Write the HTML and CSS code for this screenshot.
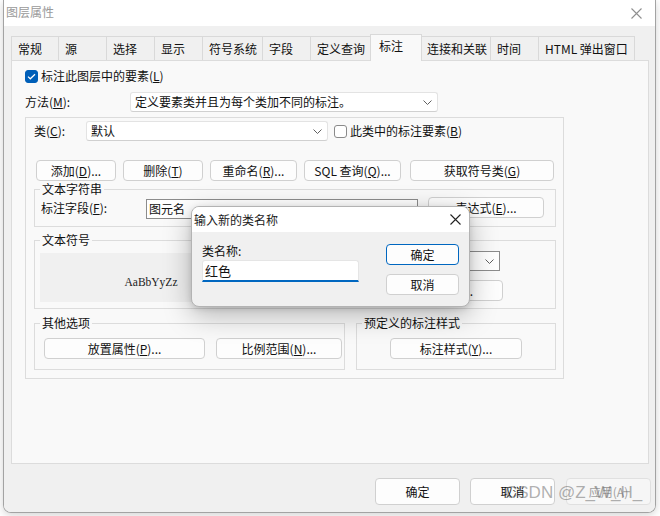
FILE: index.html
```html
<!DOCTYPE html>
<html lang="zh-CN">
<head>
<meta charset="utf-8">
<title>图层属性</title>
<link rel="stylesheet" href="styles.css">
</head>
<body>
<div class="window">
  <div class="titlebar">
    <span class="title">图层属性</span>
    <svg class="close" width="11" height="11" viewBox="0 0 11 11"><path d="M0.5 0.5L10.5 10.5M10.5 0.5L0.5 10.5" stroke="#8f8f8f" stroke-width="1.1" fill="none"/></svg>
  </div>
  <div class="client">
    <div class="tabs">
      <div class="tab first w48">常规</div>
      <div class="tab w48">源</div>
      <div class="tab w48">选择</div>
      <div class="tab w48">显示</div>
      <div class="tab w60">符号系统</div>
      <div class="tab w48">字段</div>
      <div class="tab w60">定义查询</div>
      <div class="tab sel">标注</div>
      <div class="tab w70">连接和关联</div>
      <div class="tab w48">时间</div>
      <div class="tab last w96">HTML 弹出窗口</div>
    </div>
    <div class="panel">
      <div class="row-check">
        <span class="cb checked"><svg width="9" height="7" viewBox="0 0 9 7"><path d="M1 3.6L3.3 5.8L8 1.2" stroke="#fff" stroke-width="1.2" fill="none"/></svg></span>
        <span class="cb-label">标注此图层中的要素(<u>L</u>)</span>
      </div>
      <div class="row-method">
        <span class="lbl-method">方法(<u>M</u>):</span>
        <div class="combo combo-method"><span>定义要素类并且为每个类加不同的标注。</span><svg class="chev" width="9" height="5" viewBox="0 0 9 5"><path d="M0.5 0.5L4.5 4.5L8.5 0.5" stroke="#606060" fill="none"/></svg></div>
      </div>
      <div class="grp-class">
        <div class="row-class">
          <span class="lbl-class">类(<u>C</u>):</span>
          <div class="combo combo-class"><span>默认</span><svg class="chev" width="9" height="5" viewBox="0 0 9 5"><path d="M0.5 0.5L4.5 4.5L8.5 0.5" stroke="#606060" fill="none"/></svg></div>
          <span class="cb cb-class"></span>
          <span class="cb-label2">此类中的标注要素(<u>B</u>)</span>
        </div>
        <div class="row-btns">
          <div class="btn b-add">添加(<u>D</u>)...</div>
          <div class="btn b-del">删除(<u>T</u>)</div>
          <div class="btn b-ren">重命名(<u>R</u>)...</div>
          <div class="btn b-sql">SQL 查询(<u>Q</u>)...</div>
          <div class="btn b-get">获取符号类(<u>G</u>)</div>
        </div>
        <fieldset class="fs fs-str">
          <legend>文本字符串</legend>
          <div class="row-field">
            <span class="lbl-field">标注字段(<u>F</u>):</span>
            <div class="field">图元名</div>
            <div class="btn b-expr">表达式(<u>E</u>)...</div>
          </div>
        </fieldset>
        <fieldset class="fs fs-sym">
          <legend>文本符号</legend>
          <div class="row-sym">
            <div class="preview">AaBbYyZz</div>
            <div class="sym-side">
              <div class="combo2"><svg class="chev" width="9" height="5" viewBox="0 0 9 5"><path d="M0.5 0.5L4.5 4.5L8.5 0.5" stroke="#606060" fill="none"/></svg></div>
              <div class="btn b-sym">符号(<u>S</u>)...</div>
            </div>
          </div>
        </fieldset>
        <div class="row-bottom">
          <fieldset class="fs fs-other">
            <legend>其他选项</legend>
            <div class="row-other">
              <div class="btn b-place">放置属性(<u>P</u>)...</div>
              <div class="btn b-scale">比例范围(<u>N</u>)...</div>
            </div>
          </fieldset>
          <fieldset class="fs fs-style">
            <legend>预定义的标注样式</legend>
            <div class="row-style">
              <div class="btn b-style">标注样式(<u>Y</u>)...</div>
            </div>
          </fieldset>
        </div>
      </div>
    </div>
    <div class="footer">
      <div class="btn fbtn">确定</div>
      <div class="btn fbtn">取消</div>
      <div class="btn fbtn disabled">应用(A)</div>
    </div>
  </div>
</div>

<div class="dialog">
  <div class="d-title">
    <span>输入新的类名称</span>
    <svg class="d-close" width="11" height="11" viewBox="0 0 11 11"><path d="M0.5 0.5L10.5 10.5M10.5 0.5L0.5 10.5" stroke="#222" stroke-width="1.1" fill="none"/></svg>
  </div>
  <div class="d-body">
    <div class="d-left">
      <div class="d-label">类名称:</div>
      <div class="d-input">红色</div>
    </div>
    <div class="d-right">
      <div class="btn d-btn d-ok">确定</div>
      <div class="btn d-btn d-cancel">取消</div>
    </div>
  </div>
</div>

<div class="watermark">CSDN @Z_W_H_</div>
</body>
</html>
```

FILE: styles.css
```css
* { box-sizing: border-box; }
html, body { margin: 0; padding: 0; }
body {
  width: 660px;
  height: 516px;
  overflow: hidden;
  position: relative;
  background: #ffffff;
  font-family: "Noto Sans CJK SC", "Microsoft YaHei", sans-serif;
  font-size: 12px;
  color: #111;
}
u { text-decoration: underline; text-underline-offset: 1px; }

.window {
  margin-left: 3px;
  width: 653px;
  height: 513px;
  border: 1px solid #a3a3a3;
  border-top: none;
  border-radius: 0 0 8px 8px;
  overflow: hidden;
  display: flex;
  flex-direction: column;
  box-shadow: 0 2px 8px rgba(0,0,0,0.18);
}
.titlebar {
  height: 26px;
  flex: none;
  background: #ffffff;
  display: flex;
  align-items: center;
  justify-content: space-between;
  padding: 0 13px 0 2px;
}
.title { color: #9a9a9a; line-height: 16px; margin-top: -2px; }
.close { margin-top: 1px; }

.client {
  flex: 1;
  background: #f0f0f0;
  padding: 10px 6px 0 7px;
  display: flex;
  flex-direction: column;
}
.tabs {
  display: flex;
  height: 24px;
  align-items: flex-end;
  position: relative;
  z-index: 2;
}
.tab {
  height: 24px;
  line-height: 23px;
  padding-left: 6px;
  border-top: 1px solid #d9d9d9;
  border-right: 1px solid #d9d9d9;
  background: #f0f0f0;
  white-space: nowrap;
}
.tab.first { border-left: 1px solid #d9d9d9; }
.w48 { width: 48px; }
.w60 { width: 60px; }
.w70 { width: 70px; }
.w96 { width: 96px; }
.tab.sel {
  width: 52px;
  height: 27px;
  margin: 0 -1px -1px -1px;
  padding-left: 8px;
  line-height: 22px;
  border: 1px solid #d9d9d9;
  border-bottom: none;
  background: #f9f9f9;
  position: relative;
  z-index: 3;
}
.panel {
  height: 404px;
  flex: none;
  border: 1px solid #dcdcdc;
  background: #f9f9f9;
  padding: 7px 0 0 13px;
}

.row-check { display: flex; align-items: center; height: 16px; }
.cb {
  width: 13px;
  height: 13px;
  border-radius: 3px;
  border: 1px solid #8a8a8a;
  background: #ffffff;
  display: flex;
  align-items: center;
  justify-content: center;
  flex: none;
}
.cb.checked { background: #005fb8; border-color: #005fb8; }
.cb-label { margin-left: 3px; line-height: 16px; }

.row-method { display: flex; align-items: center; margin-top: 8px; height: 20px; }
.lbl-method { width: 105px; line-height: 16px; }
.combo {
  height: 20px;
  background: #ffffff;
  border: 1px solid #e3e3e3;
  border-bottom-color: #d0d0d0;
  border-radius: 3px;
  display: flex;
  align-items: center;
  justify-content: space-between;
  padding: 0 5px 0 4px;
  line-height: 16px;
}
.combo-method { width: 308px; }

.grp-class {
  margin-top: 5px;
  width: 539px;
  height: 262px;
  border: 1px solid #dcdcdc;
  padding: 3px 0 0 8px;
}
.row-class { display: flex; align-items: center; height: 20px; }
.lbl-class { width: 52px; line-height: 16px; }
.combo-class { width: 242px; }
.cb-class { margin-left: 6px; }
.cb-label2 { margin-left: 3px; line-height: 16px; }

.btn {
  height: 21px;
  background: #fdfdfd;
  border: 1px solid #d0d0d0;
  border-radius: 4px;
  display: flex;
  align-items: center;
  justify-content: center;
  line-height: 16px;
  white-space: nowrap;
  flex: none;
}
.row-btns { display: flex; margin-top: 19px; margin-left: 2px; }
.b-add { width: 80px; }
.b-del { width: 80px; margin-left: 7px; }
.b-ren { width: 87px; margin-left: 7px; }
.b-sql { width: 97px; margin-left: 7px; }
.b-get { width: 144px; margin-left: 9px; }

.fs {
  margin: 0;
  padding: 0;
  min-width: 0;
  border: 1px solid #dcdcdc;
  width: 522px;
}
.fs legend {
  margin-left: 5px;
  padding: 0 2px;
  line-height: 16px;
  height: 16px;
}
.fs-str { height: 46px; }
.row-field { display: flex; align-items: flex-start; padding-left: 6px; }
.lbl-field { width: 105px; line-height: 16px; margin-top: 3px; }
.field {
  width: 272px;
  height: 20px;
  margin-top: 2px;
  background: #ffffff;
  border: 1px solid #8c8c8c;
  padding-left: 2px;
  line-height: 18px;
}
.b-expr { width: 116px; margin-left: 10px; }

.fs-sym { height: 77px; margin-top: 5px; }
.row-sym { display: flex; align-items: flex-start; padding-left: 5px; }
.preview {
  width: 222px;
  height: 49px;
  margin-top: 5px;
  background: #f0f0f0;
  display: flex;
  align-items: center;
  justify-content: center;
  font-family: "Liberation Serif", "Times New Roman", serif;
  font-size: 11.5px;
  color: #222;
  padding-top: 8px;
}
.sym-side {
  margin-left: auto;
  margin-right: 52px;
  display: flex;
  flex-direction: column;
  align-items: flex-end;
}
.combo2 {
  width: 100px;
  height: 20px;
  margin-top: 3px;
  margin-right: 3px;
  background: #ffffff;
  border: 1px solid #8c8c8c;
  display: flex;
  align-items: center;
  justify-content: flex-end;
  padding-right: 5px;
}
.b-sym { width: 123px; margin-top: 9px; padding-left: 14px; }

.row-bottom { display: flex; margin-top: 6px; }
.fs-other { width: 311px; height: 55px; }
.fs-style { width: 200px; height: 55px; margin-left: 11px; }
.row-other { display: flex; padding: 7px 0 0 9px; }
.b-place { width: 161px; }
.b-scale { width: 126px; margin-left: 11px; }
.row-style { display: flex; justify-content: center; padding-top: 7px; }
.b-style { width: 132px; }

.footer {
  display: flex;
  justify-content: flex-end;
  padding-top: 14px;
  margin-right: -2px;
}
.fbtn { width: 85px; height: 27px; margin-left: 10px; }
.fbtn.disabled { color: #a0a0a0; border-color: #e0e0e0; background: #f6f6f6; margin-left: 11px; }

.dialog {
  position: absolute;
  left: 191px;
  top: 206px;
  width: 279px;
  height: 101px;
  border: 1px solid #b3b3b3;
  border-radius: 8px;
  overflow: hidden;
  background: #f0f0f0;
  box-shadow: 0 8px 28px rgba(0,0,0,0.28), 0 2px 6px rgba(0,0,0,0.12);
}
.d-title {
  height: 25px;
  background: #ffffff;
  display: flex;
  align-items: center;
  justify-content: space-between;
  padding: 0 8px 0 2px;
  line-height: 16px;
  color: #1a1a1a;
}
.d-body { display: flex; padding: 11px 10px 0 10px; }
.d-left { width: 157px; }
.d-label { line-height: 16px; }
.d-input {
  margin-top: 1px;
  height: 22px;
  background: #ffffff;
  border: 1px solid #e5e5e5;
  border-bottom: 2px solid #0067c0;
  border-radius: 3px 3px 0 0;
  padding-left: 2px;
  font-size: 13px;
  line-height: 19px;
}
.d-right { margin-left: auto; display: flex; flex-direction: column; }
.d-btn { width: 73px; }
.d-ok { margin-top: 1px; border-color: #0067c0; }
.d-cancel { margin-top: 9px; }

.watermark {
  position: absolute;
  left: 505px;
  top: 483px;
  font-family: "Liberation Sans", Arial, sans-serif;
  font-size: 17px;
  line-height: 20px;
  color: rgba(110,110,110,0.55);
  white-space: nowrap;
}
```
